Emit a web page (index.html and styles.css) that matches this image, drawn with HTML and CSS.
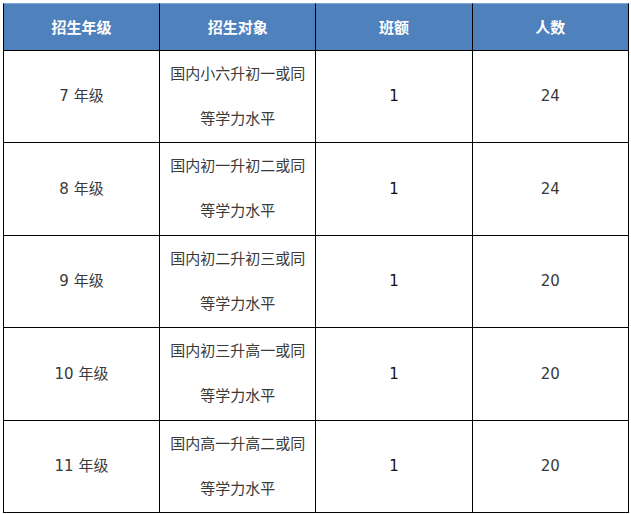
FILE: index.html
```html
<!DOCTYPE html>
<html lang="zh-CN">
<head>
<meta charset="utf-8">
<title>招生计划</title>
<link rel="stylesheet" href="styles.css">
</head>
<body>
<table class="plan">
  <thead>
    <tr>
      <th class="c1">招生年级</th>
      <th>招生对象</th>
      <th>班额</th>
      <th>人数</th>
    </tr>
  </thead>
  <tbody>
    <tr class="r-a">
      <td class="c1">7 年级</td>
      <td>国内小六升初一或同<br>等学力水平</td>
      <td class="one">1</td>
      <td>24</td>
    </tr>
    <tr class="r-b">
      <td class="c1">8 年级</td>
      <td>国内初一升初二或同<br>等学力水平</td>
      <td class="one">1</td>
      <td>24</td>
    </tr>
    <tr class="r-a">
      <td class="c1">9 年级</td>
      <td>国内初二升初三或同<br>等学力水平</td>
      <td class="one">1</td>
      <td>20</td>
    </tr>
    <tr class="r-b">
      <td class="c1">10 年级</td>
      <td>国内初三升高一或同<br>等学力水平</td>
      <td class="one">1</td>
      <td>20</td>
    </tr>
    <tr class="r-a">
      <td class="c1">11 年级</td>
      <td>国内高一升高二或同<br>等学力水平</td>
      <td class="one">1</td>
      <td>20</td>
    </tr>
  </tbody>
</table>
</body>
</html>
```

FILE: styles.css
```css
html, body {
  margin: 0;
  padding: 0;
  background: #ffffff;
}

body {
  padding: 3px 0 0 3px;
  font-family: "DejaVu Sans", "Noto Sans CJK SC", sans-serif;
  font-size: 15px;
  color: #3a3a3a;
}

.plan {
  border-collapse: separate;
  border-spacing: 0;
  table-layout: fixed;
  width: 626px;
}

.plan th,
.plan td {
  box-sizing: border-box;
  padding: 0;
  text-align: center;
  vertical-align: middle;
  border-right: 1px solid #000;
  border-bottom: 1px solid #000;
}

.plan .c1 {
  width: 157px;
  border-left: 1px solid #000;
}

.plan th {
  height: 48px;
  background: #4f81bd;
  color: #ffffff;
  font-weight: bold;
  font-family: "Noto Sans CJK SC", sans-serif;
  border-top: 1px solid #7ea5d8;
  line-height: 20px;
}

.plan td {
  line-height: 45px;
}

.plan .r-a td {
  height: 92px;
}

.plan .r-b td {
  height: 93px;
}

.plan .one {
  color: #111;
}
```
